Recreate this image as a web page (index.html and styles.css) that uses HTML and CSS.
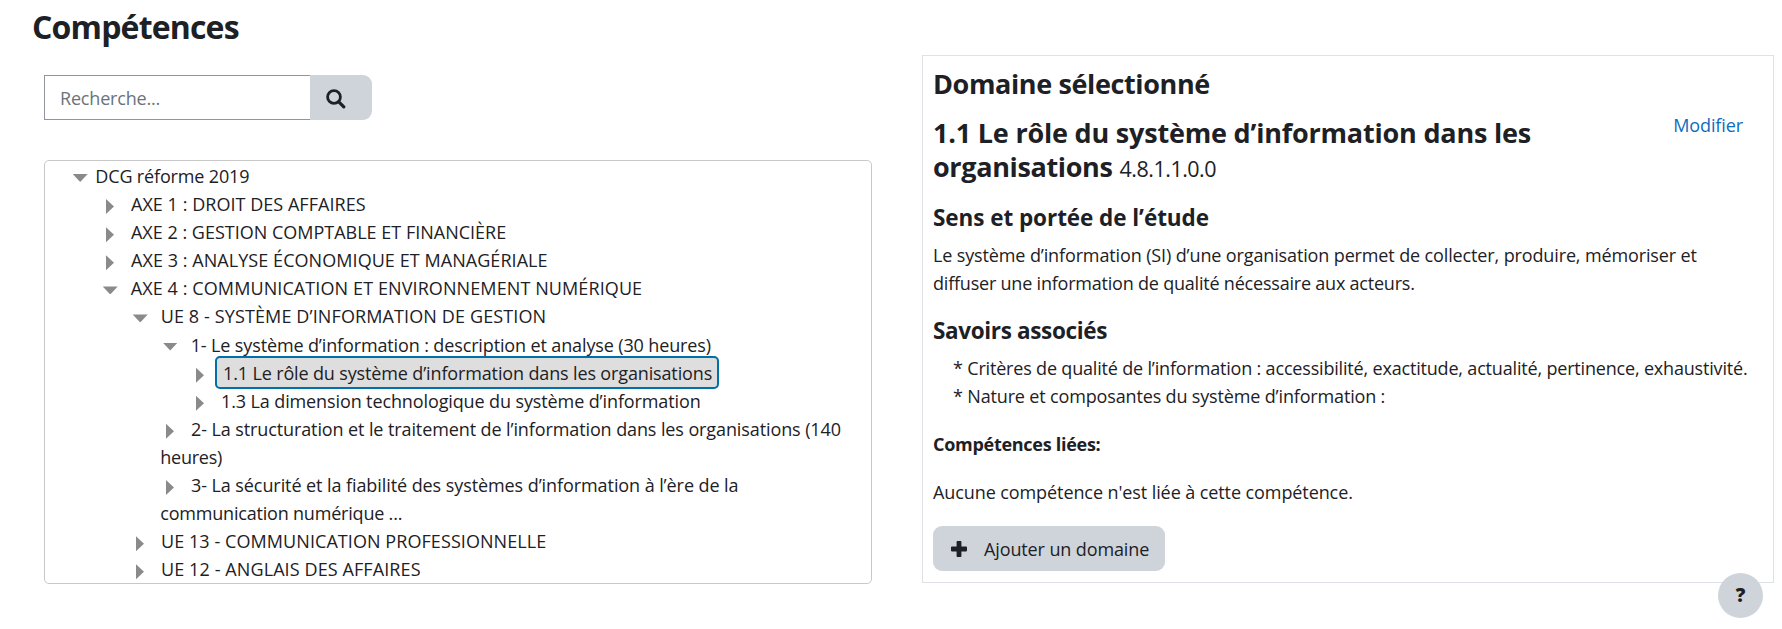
FILE: index.html
```html
<!DOCTYPE html>
<html lang="fr">
<head>
<meta charset="utf-8">
<title>Compétences</title>
<link rel="stylesheet" href="styles.css">
</head>
<body>
<main class="page">
  <section class="browser">
    <h1 class="title">Compétences</h1>
    <form class="search">
      <input class="search-input" type="text" placeholder="Recherche..." aria-label="Recherche">
      <button class="search-btn" type="button" aria-label="Rechercher">
        <svg class="search-icon" viewBox="0 0 20 20"><circle cx="8" cy="8" r="6.4" fill="none" stroke="currentColor" stroke-width="2.8"/><path d="M12.8 12.8L17.8 17.8" stroke="currentColor" stroke-width="3.2" stroke-linecap="round"/></svg>
      </button>
    </form>
    <div class="tree">
      <ul class="level root">
        <li><i class="arrow down"></i><span class="t1">DCG réforme 2019</span>
          <ul class="level">
            <li><i class="arrow"></i><span class="t2">AXE 1 : DROIT DES AFFAIRES</span></li>
            <li><i class="arrow"></i><span class="t3">AXE 2 : GESTION COMPTABLE ET FINANCIÈRE</span></li>
            <li><i class="arrow"></i><span class="t4">AXE 3 : ANALYSE ÉCONOMIQUE ET MANAGÉRIALE</span></li>
            <li><i class="arrow down"></i><span class="t5">AXE 4 : COMMUNICATION ET ENVIRONNEMENT NUMÉRIQUE</span>
              <ul class="level">
                <li><i class="arrow down"></i><span class="t6">UE 8 - SYSTÈME D’INFORMATION DE GESTION</span>
                  <ul class="level">
                    <li><i class="arrow down"></i><span class="t7">1- Le système d’information : description et analyse (30 heures)</span>
                      <ul class="level">
                        <li><i class="arrow"></i><span class="selected t8">1.1 Le rôle du système d’information dans les organisations</span></li>
                        <li><i class="arrow"></i><span class="t9">1.3 La dimension technologique du système d’information</span></li>
                      </ul>
                    </li>
                    <li><i class="arrow"></i><span class="t10">2- La structuration et le traitement de l’information dans les organisations (140</span><br><span class="t11">heures)</span></li>
                    <li><i class="arrow"></i><span class="t12">3- La sécurité et la fiabilité des systèmes d’information à l’ère de la</span><br><span class="t13">communication numérique ...</span></li>
                  </ul>
                </li>
                <li><i class="arrow"></i><span class="t14">UE 13 - COMMUNICATION PROFESSIONNELLE</span></li>
                <li><i class="arrow"></i><span class="t15">UE 12 - ANGLAIS DES AFFAIRES</span></li>
              </ul>
            </li>
          </ul>
        </li>
      </ul>
    </div>
  </section>
  <section class="panel">
    <h2 class="heading r1">Domaine sélectionné</h2>
    <div class="domain">
      <h2 class="heading"><span class="r2">1.1 Le rôle du système d’information dans les</span><br><span class="r3">organisations</span> <small class="code">4.8.1.1.0.0</small></h2>
      <a class="edit">Modifier</a>
    </div>
    <h3 class="sub first r4">Sens et portée de l’étude</h3>
    <p class="text"><span class="r5">Le système d’information (SI) d’une organisation permet de collecter, produire, mémoriser et</span><br><span class="r6">diffuser une information de qualité nécessaire aux acteurs.</span></p>
    <h3 class="sub r7">Savoirs associés</h3>
    <p class="text notes"><span class="r8">* Critères de qualité de l’information : accessibilité, exactitude, actualité, pertinence, exhaustivité.</span><br><span class="r9">* Nature et composantes du système d’information :</span></p>
    <p class="text linked"><strong class="r10">Compétences liées:</strong></p>
    <p class="text none"><span class="r11">Aucune compétence n'est liée à cette compétence.</span></p>
    <button class="add" type="button">
      <svg class="plus" viewBox="0 0 16 16"><path d="M6.4 0h3.2q.8 0 .8.8v4.8h4.8q.8 0 .8.8v3.2q0 .8-.8.8h-4.8v4.8q0 .8-.8.8H6.4q-.8 0-.8-.8v-4.8H.8q-.8 0-.8-.8V6.4q0-.8.8-.8h4.8V.8q0-.8.8-.8z" fill="currentColor"/></svg>
      <span class="r12">Ajouter un domaine</span>
    </button>
  </section>
</main>
<button class="help" type="button">?</button>
</body>
</html>
```
FILE: styles.css
```css
* { box-sizing: border-box; }
body {
  margin: 0;
  height: 629px;
  overflow: hidden;
  background: #fff;
  color: #1d2125;
  font: 18px/28.125px "Open Sans", "Noto Sans", sans-serif;
}
.page { display: flex; align-items: flex-start; gap: 50px; padding-left: 32px; }
.browser { width: 840px; }
.title { margin: 7px 0 28px; font-size: 32px; line-height: 40px; font-weight: 700; letter-spacing: -.83px; }
.search { display: flex; height: 45px; margin: 0 0 40px 12px; }
.search-input {
  width: 266px;
  padding: 1px 0 0 15px;
  border: 1px solid #8f959e;
  border-right: 0;
  border-radius: 0;
  background: #fff;
  font: inherit;
  color: inherit;
  letter-spacing: -.18px;
}
.search-input::placeholder { color: #6a737b; opacity: 1; }
.search-btn {
  width: 62px;
  padding: 0 0 0 16px;
  display: flex;
  align-items: center;
  border: 0;
  border-radius: 0 9px 9px 0;
  background: #ced4da;
  color: #1d2125;
}
.search-icon { width: 20px; height: 20px; margin-top: 2px; }
.tree {
  height: 424px;
  margin-left: 12px;
  padding: 1px 0 0 25.3px;
  overflow: hidden;
  border: 1px solid #c8c8c8;
  border-radius: 5px;
  line-height: 28.1px;
  white-space: nowrap;
}
.level { margin: 0; padding: 0 0 0 30px; list-style: none; }
.root { padding-left: 0; }
.arrow {
  display: inline-block;
  width: 8px;
  height: 15px;
  margin: 0 17px 0 5.7px;
  vertical-align: -3px;
  background: #8a8a8a;
  clip-path: polygon(0 0, 100% 50%, 0 100%);
}
.arrow.down {
  width: 15px;
  height: 8px;
  margin: 0 13px 0 2.4px;
  vertical-align: 1px;
  clip-path: polygon(0 0, 100% 0, 50% 100%);
}
.root > li > .arrow { margin-right: 7.6px; }
.selected {
  margin-left: -6px;
  padding: 2.7px 5px 2.7px 6px;
  border: 2px solid #0070a8;
  border-radius: 5px;
  background: #dedede;
}
.t1 { letter-spacing: -.15px; }
.t2 { letter-spacing: .04px; }
.t4 { letter-spacing: .06px; }
.t5 { letter-spacing: .1px; }
.t6 { letter-spacing: .12px; }
.t7 { letter-spacing: -.13px; }
.t8 { letter-spacing: -.14px; }
.t9 { letter-spacing: -.115px; }
.t10 { letter-spacing: -.105px; }
.t11 { letter-spacing: -.25px; }
.t12 { letter-spacing: -.08px; }
.t13 { letter-spacing: -.2px; }
.t14 { letter-spacing: .07px; }
.t15 { letter-spacing: .1px; }
.panel {
  width: 852px;
  height: 528px;
  margin-top: 55px;
  padding: 11px 10px 0;
  border: 1px solid #dee2e6;
}
.heading { margin: 0; font-size: 27px; line-height: 34px; font-weight: 700; }
.domain { display: flex; justify-content: space-between; padding: 15px 20px 0 0; }
.code { font-size: 21.5px; font-weight: 400; letter-spacing: -.5px; }
.edit { margin-top: -5px; color: #0f6cbf; letter-spacing: -.1px; }
.sub { margin: 20px 0 10px; font-size: 22.5px; line-height: 27px; font-weight: 700; }
.sub.first { margin-top: 17.5px; }
.text { margin: 0; white-space: nowrap; }
.notes { padding-left: 20px; }
.linked { margin-top: 20px; }
.none { margin: 20px 0; }
.r1 { letter-spacing: -.38px; }
.r2 { letter-spacing: -.2px; }
.r3 { letter-spacing: -.35px; }
.r4 { letter-spacing: -.06px; }
.r5 { letter-spacing: -.13px; }
.r6 { letter-spacing: -.21px; }
.r7 { letter-spacing: -.35px; }
.r8 { letter-spacing: -.18px; }
.r9 { letter-spacing: -.155px; }
.r10 { letter-spacing: -.28px; }
.r11 { letter-spacing: -.09px; }
.r12 { letter-spacing: -.12px; }
.add {
  display: flex;
  align-items: center;
  gap: 17px;
  width: 232px;
  height: 45px;
  padding: 0 0 0 18px;
  border: 0;
  border-radius: 9px;
  background: #ced4da;
  color: #1d2125;
  font: inherit;
  white-space: nowrap;
}
.plus { width: 16px; height: 16px; }
.help {
  position: absolute;
  left: 1718px;
  top: 573px;
  width: 45px;
  height: 45px;
  padding: 0;
  border: 0;
  border-radius: 50%;
  background: #ced4da;
  color: #1d2125;
  font: 800 19px/45px "Open Sans", sans-serif;
}
```
